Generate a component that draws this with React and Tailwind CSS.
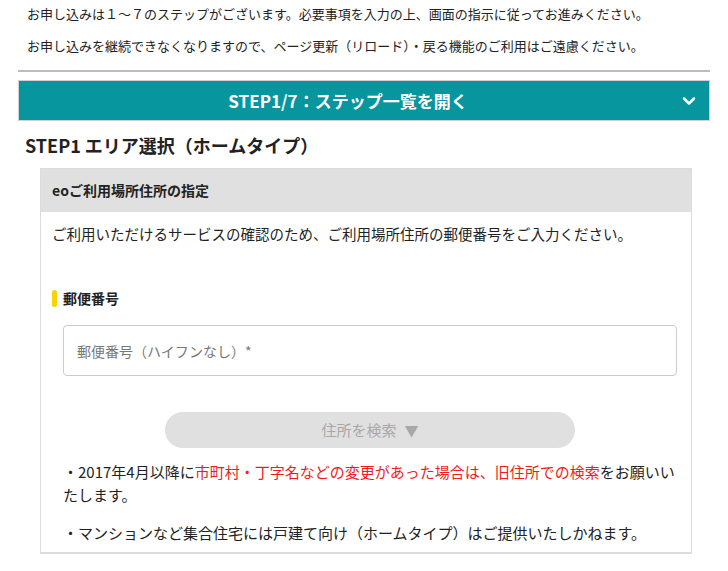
import { ChevronDown } from "lucide-react";

const App = () => {
  return (
    <div className="min-h-screen w-full bg-white text-[#222] font-['Noto_Sans_CJK_JP','Noto_Sans',sans-serif] px-[18px]">
      {/* Intro */}
      <div className="pt-[4px] pl-[9px] text-[13px]">
        <p className="leading-[20px]">
          お申し込みは１～７のステップがございます。必要事項を入力の上、画面の指示に従ってお進みください。
        </p>
        <p className="leading-[20px] mt-[12px]">
          お申し込みを継続できなくなりますので、ページ更新（リロード）・戻る機能のご利用はご遠慮ください。
        </p>
      </div>

      <div className="mt-[14px] h-[2px] bg-[#bdbdbd]" />

      {/* Step bar */}
      <div className="mt-[8px] h-[41px] bg-[#07959e] border border-[#d0d0d0] relative flex items-center justify-center pr-[32px]">
        <span className="text-white font-bold text-[17px]">STEP1/7：ステップ一覧を開く</span>
        <ChevronDown size={20} strokeWidth={3} className="absolute right-[10px] text-white" />
      </div>

      <h1 className="mt-[11px] pl-[7px] text-[18px] leading-[26px] font-bold">
        STEP1 エリア選択（ホームタイプ）
      </h1>

      {/* Card */}
      <div className="mt-[10px] ml-[22px] mr-[18px] border border-[#dcdcdc] border-b-2">
        <div className="h-[43px] bg-[#e0e0e0] flex items-center pl-[11px]">
          <span className="text-[14px] font-bold">eoご利用場所住所の指定</span>
        </div>

        <div className="pl-[11px] pr-[14px] pt-[12px] pb-[8px]">
          <p className="text-[14.5px] leading-[20px]">
            ご利用いただけるサービスの確認のため、ご利用場所住所の郵便番号をご入力ください。
          </p>

          <div className="mt-[44px] flex items-center gap-[6px] h-[20px]">
            <span className="w-[5px] h-[17px] rounded-full bg-[#f7d300]" />
            <span className="text-[14px] font-bold">郵便番号</span>
          </div>

          <div className="ml-[11px]">
            <input
              type="text"
              placeholder="郵便番号（ハイフンなし）*"
              className="mt-[17px] w-full h-[51px] border border-[#cccccc] rounded-[4px] pl-[13px] text-[14px] placeholder:text-[#777] outline-none"
            />

            <div className="mt-[36px] flex justify-center">
              <button className="w-[410px] h-[36px] rounded-full bg-[#e0e0e0] text-[#a8a8a8] text-[15px] flex items-center justify-center gap-[8px]">
                住所を検索<span className="text-[14px]">▼</span>
              </button>
            </div>

            <p className="mt-[12px] text-[15px] leading-[23px]">
              <span className="whitespace-nowrap">
                ・2017年4月以降に<span className="text-[#f01c1c]">市町村・丁字名などの変更があった場合は、旧住所での検索</span>をお願いい
              </span>
              <br />
              たします。
            </p>
            <p className="mt-[15px] text-[15px] leading-[23px]">
              ・マンションなど集合住宅には戸建て向け（ホームタイプ）はご提供いたしかねます。
            </p>
          </div>
        </div>
      </div>
    </div>
  );
};

export default App;
